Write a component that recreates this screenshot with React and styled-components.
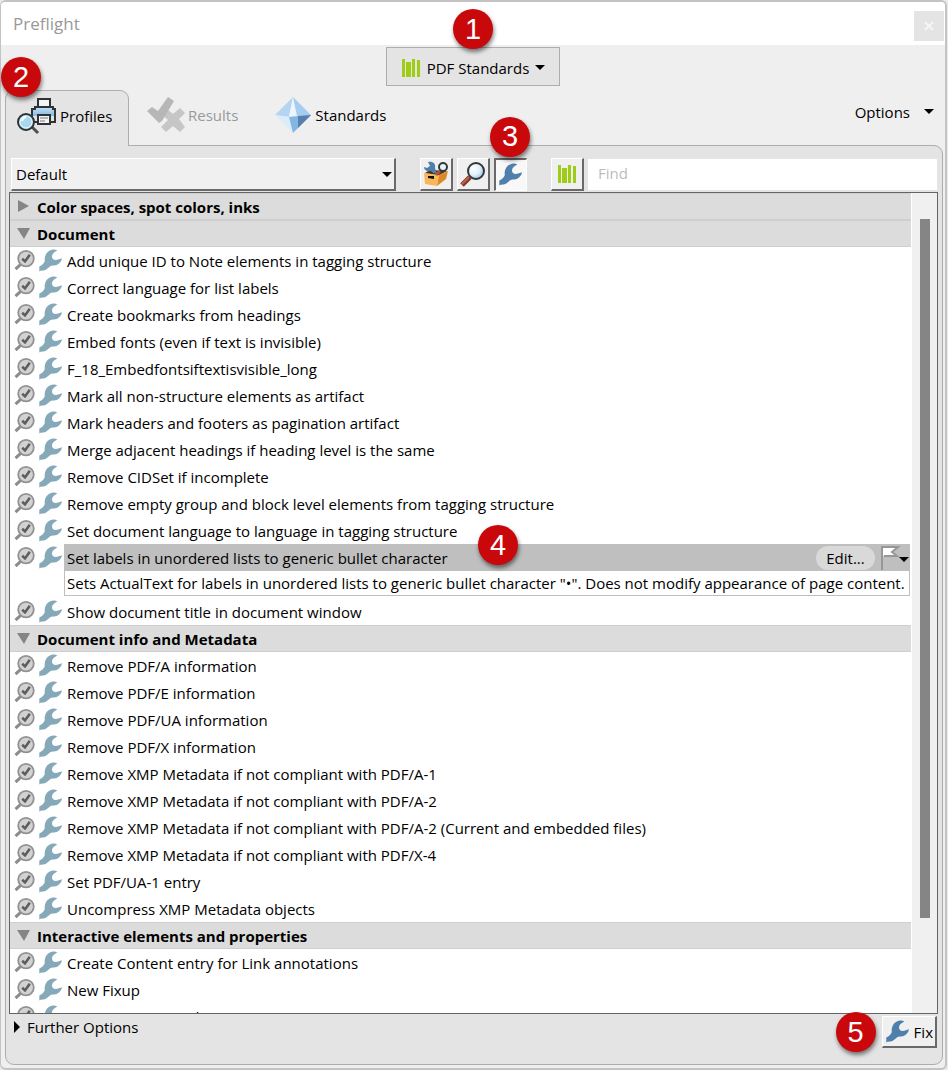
import React from "react";
import styled, { createGlobalStyle, css } from "styled-components";

const sections = [
  { title: "Color spaces, spot colors, inks", open: false, items: [] },
  {
    title: "Document",
    open: true,
    items: [
      { name: "Add unique ID to Note elements in tagging structure" },
      { name: "Correct language for list labels" },
      { name: "Create bookmarks from headings" },
      { name: "Embed fonts (even if text is invisible)" },
      { name: "F_18_Embedfontsiftextisvisible_long" },
      { name: "Mark all non-structure elements as artifact" },
      { name: "Mark headers and footers as pagination artifact" },
      { name: "Merge adjacent headings if heading level is the same" },
      { name: "Remove CIDSet if incomplete" },
      {
        name: "Remove empty group and block level elements from tagging structure",
      },
      { name: "Set document language to language in tagging structure" },
      {
        name: "Set labels in unordered lists to generic bullet character",
        description:
          'Sets ActualText for labels in unordered lists to generic bullet character "•". Does not modify appearance of page content.',
      },
      { name: "Show document title in document window" },
    ],
  },
  {
    title: "Document info and Metadata",
    open: true,
    items: [
      { name: "Remove PDF/A information" },
      { name: "Remove PDF/E information" },
      { name: "Remove PDF/UA information" },
      { name: "Remove PDF/X information" },
      { name: "Remove XMP Metadata if not compliant with PDF/A-1" },
      { name: "Remove XMP Metadata if not compliant with PDF/A-2" },
      {
        name: "Remove XMP Metadata if not compliant with PDF/A-2 (Current and embedded files)",
      },
      { name: "Remove XMP Metadata if not compliant with PDF/X-4" },
      { name: "Set PDF/UA-1 entry" },
      { name: "Uncompress XMP Metadata objects" },
    ],
  },
  {
    title: "Interactive elements and properties",
    open: true,
    items: [
      { name: "Create Content entry for Link annotations" },
      { name: "New Fixup" },
      { name: "New Fixup (Second)" },
    ],
  },
];

const WrenchIcon = ({ color = "#4f7fab" }) => (
  <svg width="24" height="24" viewBox="0 0 24 24" aria-hidden="true">
    <path
      fill={color}
      d="M0.3 17.5 C3 16.5 5 14.5 5.8 12 C5 7 8 1.5 13 0.7 C15 0.3 17 0.6 18.3 1.6 C15.5 3 13 5 13 7.5 C13 9.5 14.5 11 16.5 11 C19 11 21 9.6 23 9.2 C22.7 12 20 15.5 16.5 16.3 C14.5 16.9 13 16.3 11.5 17 C9 19 7.5 21 4.5 21.6 C3 21.8 2 21.4 0.3 22.6 Z"
    />
  </svg>
);

const CheckLensIcon = () => (
  <svg width="22" height="22" viewBox="0 0 22 22" aria-hidden="true">
    <path d="M1.5 20.2 L7.5 14.6" stroke="#8c8c8c" strokeWidth="3" />
    <circle cx="12" cy="9.6" r="7.8" fill="#d2d2d2" stroke="#929292" strokeWidth="1.8" />
    <path d="M8.2 9.8 L11 12.4 L15.8 5.8" fill="none" stroke="#5d5d5d" strokeWidth="2.6" />
  </svg>
);

const BarsIcon = () => (
  <svg width="20" height="20" viewBox="0 0 20 20" fill="#9fcd17" aria-hidden="true">
    <rect x="1" y="1" width="3" height="18" />
    <rect x="5" y="4" width="5" height="15" />
    <rect x="11" y="1" width="3" height="18" />
    <rect x="16" y="2" width="3" height="17" />
  </svg>
);

const ProfilesIcon = () => (
  <svg width="40" height="38" viewBox="0 0 40 38" aria-hidden="true">
    <defs>
      <linearGradient id="printer" x1="0" y1="0" x2="0" y2="1">
        <stop offset="0" stopColor="#c3e2f9" />
        <stop offset="1" stopColor="#5f9bd0" />
      </linearGradient>
    </defs>
    <path
      d="M18 10 H36 V12 H38 V25 H15 V12 H18 Z"
      fill="url(#printer)"
      stroke="#303336"
      strokeWidth="2"
    />
    <rect x="16" y="19" width="21" height="5" fill="#dfe3e6" />
    <rect x="21" y="2" width="12" height="8" fill="#f4f4f4" stroke="#303336" strokeWidth="2" />
    <rect x="21" y="18" width="12" height="9" fill="#f4f4f4" stroke="#303336" strokeWidth="2" />
    <path d="M23 21 H31 M23 24 H28" stroke="#777" strokeWidth="1" />
    <path d="M15 30 L21 36" stroke="#4b4f52" strokeWidth="3" />
    <circle cx="9" cy="25" r="8" fill="#a8d8ee" stroke="#303336" strokeWidth="2" />
    <circle cx="9" cy="25" r="6" fill="none" stroke="#f0faff" strokeWidth="1" />
    <path d="M5 24 A5 5 0 0 1 9 20" stroke="#fff" strokeWidth="2" fill="none" />
  </svg>
);

const ResultsIcon = () => (
  <svg width="38" height="36" viewBox="0 0 38 36" aria-hidden="true">
    <path
      d="M14 17 L19 11 L26 17 L33 11 L38 16 L32 22 L38 30 L33 35 L26 29 L19 35 L14 30 L21 23 Z"
      fill="#c6c6c6"
    />
    <path d="M0 14 L5 10 L11 14 L21 0 L27 4 L15 24 L12 26 Z" fill="#b7b7b7" />
  </svg>
);

const StandardsIcon = () => (
  <svg width="38" height="38" viewBox="0 0 38 38" aria-hidden="true">
    <path d="M19 1 L1 19 L15 21 Z" fill="#b4d4f1" />
    <path d="M19 1 L15 21 L24 20 Z" fill="#edf6fd" />
    <path d="M19 1 L23 20 L37 19 Z" fill="#a6ccf0" />
    <path d="M1 19 L15 21 L19 37 Z" fill="#dcecfa" />
    <path d="M15 21 L24 20 L37 19 L19 37 Z" fill="#83b6e3" />
    <path d="M24 20 L37 19 L24 32 Z" fill="#5681ae" />
  </svg>
);

const LensIcon = () => (
  <svg width="26" height="26" viewBox="0 0 26 26" aria-hidden="true">
    <defs>
      <radialGradient id="glass" cx="0.35" cy="0.35" r="0.8">
        <stop offset="0" stopColor="#ffffff" />
        <stop offset="0.5" stopColor="#dff1fb" />
        <stop offset="1" stopColor="#7bb8da" />
      </radialGradient>
    </defs>
    <path d="M2 24 L10 16" stroke="#7e3a2a" strokeWidth="5" />
    <path d="M2 23 L9 16" stroke="#c4634c" strokeWidth="2" />
    <circle cx="16" cy="10" r="8" fill="url(#glass)" stroke="#34383b" strokeWidth="2" />
  </svg>
);

const ToolboxIcon = () => (
  <svg width="26" height="26" viewBox="0 0 26 26" aria-hidden="true">
    <path d="M1 12 L16 14 L14 25 L2 23 Z" fill="#f8b75a" />
    <path d="M16 14 L25 10 L23 18 L14 25 Z" fill="#dd8a22" />
    <path d="M2 12 L7 9 L24 10 L16 14 Z" fill="#493018" />
    <path d="M5 15 H11 V18 L5 17 Z" fill="#15120e" />
    <path
      d="M5 1 C10 0 13 3 12 7 L14 13 L10 12 L8 10 C4 11 1 9 1 6 L4 7 L7 5 Z"
      fill="#4f7fab"
    />
    <path d="M13 14 L17 10" stroke="#b4513d" strokeWidth="3" />
    <circle cx="20" cy="6" r="4" fill="#e3f5fd" stroke="#34383b" strokeWidth="2" />
  </svg>
);

const FlagIcon = () => (
  <svg width="28" height="24" viewBox="0 0 28 24" aria-hidden="true">
    <path d="M2 1 H17 L12 6 L16 10 H2 Z" fill="#fff" />
    <path d="M1 24 V1 H17 L11 6 L16 10 H3" fill="none" stroke="#979797" strokeWidth="2" />
    <path d="M18 11 H28 L23 16 Z" fill="#000" />
  </svg>
);

const Caret = () => (
  <svg width="10" height="6" viewBox="0 0 10 6" aria-hidden="true">
    <path d="M0 0 H10 L5 5 Z" fill="currentColor" />
  </svg>
);

const App = () => (
  <>
    <GlobalStyle />
    <Window>
      <TitleBar>
        <Title>Preflight</Title>
        <CloseButton aria-label="Close">
          <svg width="10" height="10" viewBox="0 0 10 10" aria-hidden="true">
            <path d="M1 1 L9 9 M9 1 L1 9" stroke="#f6f6f6" strokeWidth="2" />
          </svg>
        </CloseButton>
      </TitleBar>

      <LibraryBar>
        <LibraryButton>
          <BarsIcon />
          PDF Standards
          <Caret />
          <Badge $top="-39px" $left="66px">1</Badge>
        </LibraryButton>
      </LibraryBar>

      <TabBar>
        <Tab $active>
          <ProfilesIcon />
          Profiles
          <Badge $top="-34px" $left="-5px">2</Badge>
        </Tab>
        <Tab $muted>
          <ResultsIcon />
          Results
        </Tab>
        <Tab>
          <StandardsIcon />
          Standards
        </Tab>
        <OptionsButton>
          Options
          <Caret />
        </OptionsButton>
      </TabBar>

      <Panel>
        <Toolbar>
          <SelectWrap>
            <Select aria-label="Library" defaultValue="Default">
              <option>Default</option>
            </Select>
            <SelectArrow>
              <Caret />
            </SelectArrow>
          </SelectWrap>
          <ToolGroup>
            <ToolButton aria-label="Show profiles">
              <ToolboxIcon />
            </ToolButton>
            <ToolButton aria-label="Show checks">
              <LensIcon />
            </ToolButton>
            <ToolButton aria-label="Show fixups" $pressed>
              <WrenchIcon />
              <Badge $top="-43px" $left="-6px">3</Badge>
            </ToolButton>
          </ToolGroup>
          <ToolButton aria-label="Standards filter">
            <BarsIcon />
          </ToolButton>
          <FindInput aria-label="Find" placeholder="Find" />
        </Toolbar>

        <ListBox>
          <List>
            {sections.map((section) => (
              <React.Fragment key={section.title}>
                <SectionHeader>
                  <svg width="14" height="14" viewBox="0 0 14 14" aria-hidden="true">
                    <path
                      d={section.open ? "M0 1 H13 L7 12 Z" : "M1 0 L12 6 L1 12 Z"}
                      fill="#858585"
                    />
                  </svg>
                  {section.title}
                </SectionHeader>
                {section.items.map((item) => (
                  <Row key={item.name}>
                    <RowIcons>
                      <CheckLensIcon />
                      <WrenchIcon color="#86a9b9" />
                    </RowIcons>
                    {item.description ? (
                      <Selected>
                        <SelectedName>
                          <span>{item.name}</span>
                          <Badge $top="-19px" $left="414px">4</Badge>
                          <EditButton>Edit...</EditButton>
                          <FlagButton aria-label="Flag">
                            <FlagIcon />
                          </FlagButton>
                        </SelectedName>
                        <Description>{item.description}</Description>
                      </Selected>
                    ) : (
                      <Name>{item.name}</Name>
                    )}
                  </Row>
                ))}
              </React.Fragment>
            ))}
          </List>
          <ScrollTrack>
            <ScrollThumb />
          </ScrollTrack>
        </ListBox>

        <Footer>
          <FurtherButton>
            <svg width="6" height="12" viewBox="0 0 6 12" aria-hidden="true">
              <path d="M0 0 L6 6 L0 12 Z" />
            </svg>
            Further Options
          </FurtherButton>
          <FixButton>
            <WrenchIcon />
            Fix
            <Badge $top="-5px" $left="-47px">5</Badge>
          </FixButton>
        </Footer>
      </Panel>
    </Window>
  </>
);

const GlobalStyle = createGlobalStyle`
  * {
    box-sizing: border-box;
  }

  body {
    margin: 0;
    background-color: #e9e9e9;
  }

  body,
  button,
  input,
  select {
    font-family: "Open Sans", "Noto Sans", sans-serif;
    font-size: 15px;
    color: #000;
  }

  svg {
    display: block;
    flex: none;
  }
`;

const Window = styled.div`
  display: flex;
  flex-direction: column;
  height: 100vh;
  margin-right: 1px;
  border: 2px solid #c3c3c3;
  border-left-width: 1px;
  border-radius: 6px;
  background-color: #efefef;
`;

const TitleBar = styled.header`
  display: flex;
  justify-content: space-between;
  align-items: center;
  height: 43px;
  padding: 0 1px 0 12px;
  border-radius: 4px 4px 0 0;
  background-color: #fff;
`;

const Title = styled.h1`
  margin: 0;
  font-size: 17px;
  font-weight: 400;
  color: #999;
`;

const buttonReset = css`
  display: flex;
  align-items: center;
  padding: 0;
  border: none;
  background: none;
`;

const CloseButton = styled.button`
  ${buttonReset}
  justify-content: center;
  width: 30px;
  height: 30px;
  margin-top: 5px;
  background-color: #e4e4e4;
`;

const LibraryBar = styled.div`
  display: flex;
  justify-content: center;
  padding-top: 2px;
`;

const LibraryButton = styled.button`
  ${buttonReset}
  position: relative;
  justify-content: center;
  gap: 6px;
  width: 174px;
  height: 39px;
  padding-top: 2px;
  border: 1px solid #adadad;
  background-color: #e4e4e4;
`;

const Badge = styled.span`
  position: absolute;
  z-index: 2;
  top: ${({ $top }) => $top};
  left: ${({ $left }) => $left};
  display: flex;
  justify-content: center;
  align-items: center;
  width: 40px;
  height: 40px;
  border-radius: 50%;
  background-color: #c9080c;
  box-shadow: 1px 3px 4px rgba(0, 0, 0, 0.5);
  color: #fff;
  font-family: "Liberation Sans", sans-serif;
  font-size: 29px;
  font-weight: 400;
`;

const TabBar = styled.nav`
  display: flex;
  align-items: stretch;
  height: 56px;
  margin: 4px 2px -1px 4px;
`;

const Tab = styled.button`
  ${buttonReset}
  position: relative;
  gap: 3px;
  margin-right: 18px;
  padding-bottom: 6px;
  color: ${({ $muted }) => ($muted ? "#999" : "#000")};

  & + & {
    margin-right: 36px;
  }

  ${({ $active }) =>
    $active &&
    css`
      z-index: 1;
      width: 124px;
      padding-left: 11px;
      border: 1px solid #adadad;
      border-bottom: none;
      border-radius: 9px 9px 0 0;
      background-color: #e4e4e4;
    `}
`;

const OptionsButton = styled.button`
  ${buttonReset}
  gap: 14px;
  margin-left: auto;
  padding: 0 9px 13px 0;
`;

const Panel = styled.main`
  display: flex;
  flex: 1;
  flex-direction: column;
  min-height: 0;
  margin: 0 2px 3px 4px;
  padding: 10px 4px 0 3px;
  border: 1px solid #adadad;
  border-radius: 0 9px 9px 9px;
  background-color: #e4e4e4;
`;

const Toolbar = styled.div`
  display: flex;
  align-items: center;
  height: 36px;
  padding: 0 1px 0 2px;
`;

const raised = css`
  border: 1px solid #fff;
  border-right: 2px solid #696969;
  border-bottom: 2px solid #696969;
  background-color: #f0f0f0;
`;

const SelectWrap = styled.div`
  position: relative;
  flex: 0 1 385px;
`;

const Select = styled.select`
  ${raised}
  width: 100%;
  height: 33px;
  padding: 0 4px;
  border-radius: 0;
  appearance: none;
`;

const SelectArrow = styled.span`
  position: absolute;
  top: 14px;
  right: 4px;
  pointer-events: none;
`;

const ToolGroup = styled.div`
  display: flex;
  gap: 4px;
  margin: 0 24px;
`;

const ToolButton = styled.button`
  ${buttonReset}
  ${raised}
  position: relative;
  justify-content: center;
  width: 33px;
  height: 33px;

  ${({ $pressed }) =>
    $pressed &&
    css`
      border: 1px solid #fff;
      border-top: 2px solid #696969;
      border-left: 2px solid #696969;
      background-color: #f8f8f8;
    `}
`;

const FindInput = styled.input`
  flex: 1;
  min-width: 0;
  height: 31px;
  margin-left: 4px;
  padding: 0 10px 2px;
  border: none;
  background-color: #fff;

  &::placeholder {
    color: #bcbcbc;
  }
`;

const ListBox = styled.div`
  display: flex;
  flex: 1;
  min-height: 0;
  border: 1px solid #646464;
  background-color: #fff;
`;

const List = styled.div`
  flex: 1;
  min-width: 0;
  overflow: hidden;
`;

const SectionHeader = styled.h2`
  display: flex;
  align-items: center;
  gap: 6px;
  height: 27px;
  margin: 0;
  padding-left: 7px;
  border-top: 1px solid #cfcfcf;
  border-bottom: 1px solid #cfcfcf;
  background-color: #dcdcdc;
  font-size: 15px;
  font-weight: 700;
`;

const Row = styled.div`
  display: flex;
  align-items: flex-start;
`;

const RowIcons = styled.span`
  display: flex;
  gap: 3px;
  width: 54px;
  padding: 2px 0 0 4px;
`;

const Name = styled.span`
  height: 27px;
  padding: 1px 0 0 3px;
  line-height: 27px;
  white-space: nowrap;
`;

const Selected = styled.div`
  flex: 1;
  min-width: 0;
  height: 54px;
  margin-right: 1px;
`;

const SelectedName = styled.div`
  position: relative;
  display: flex;
  align-items: center;
  gap: 6px;
  height: 27px;
  padding: 0 1px 0 3px;
  background-color: #bfbfbf;

  span:first-child {
    flex: 1;
  }
`;

const EditButton = styled.button`
  ${buttonReset}
  justify-content: center;
  width: 59px;
  height: 24px;
  border-radius: 12px;
  background-color: #d9d9d9;
`;

const FlagButton = styled.button`
  ${buttonReset}
`;

const Description = styled.p`
  height: 25px;
  margin: 0;
  padding-left: 2px;
  overflow: hidden;
  border: 1px solid #bfbfbf;
  border-top: none;
  line-height: 24px;
  white-space: nowrap;
`;

const ScrollTrack = styled.div`
  width: 26px;
  padding: 26px 7px 0 8px;
  border-left: 1px solid #fff;
  background-color: #f0f0f0;
`;

const ScrollThumb = styled.div`
  height: 88%;
  background-color: #858585;
`;

const Footer = styled.footer`
  display: flex;
  justify-content: space-between;
  align-items: flex-start;
  height: 50px;
  padding: 2px 1px 0 5px;
`;

const FurtherButton = styled.button`
  ${buttonReset}
  gap: 7px;
  height: 22px;
`;

const FixButton = styled.button`
  ${buttonReset}
  ${raised}
  position: relative;
  gap: 4px;
  height: 32px;
  padding: 0 2px 0 3px;
`;

export default App;
